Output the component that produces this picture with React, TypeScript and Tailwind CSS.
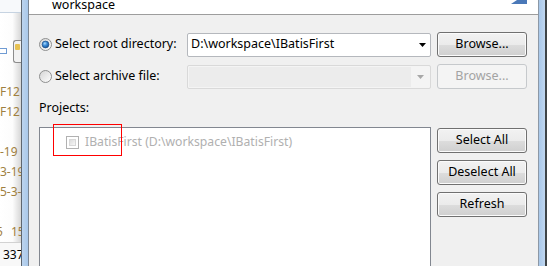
import React from "react";

function Radio({ checked }: { checked?: boolean }) {
  return (
    <svg width="13" height="13" viewBox="0 0 13 13" className="shrink-0">
      <defs>
        <linearGradient id={checked ? "rbOn" : "rbOff"} x1="0" y1="0" x2="1" y2="1">
          <stop offset="0" stopColor="#d4d4d4" />
          <stop offset="1" stopColor="#ffffff" />
        </linearGradient>
        <radialGradient id="rbDot" cx="0.4" cy="0.35" r="0.7">
          <stop offset="0" stopColor="#a9dcff" />
          <stop offset="0.45" stopColor="#3b8ad6" />
          <stop offset="1" stopColor="#0f4c92" />
        </radialGradient>
      </defs>
      <circle cx="6.5" cy="6.5" r="6" fill={checked ? "url(#rbOn)" : "url(#rbOff)"} stroke="#8e8f8f" />
      {checked && <circle cx="6.5" cy="6.5" r="3.4" fill="url(#rbDot)" stroke="#1f4f86" strokeWidth="0.7" />}
    </svg>
  );
}

function Check() {
  return (
    <div className="h-[13px] w-[13px] shrink-0 border border-[#b1b1b1] bg-white p-[2px]">
      <div className="h-full w-full border border-[#d8d8d8] bg-[linear-gradient(135deg,#dcdcdc,#f7f7f7)]" />
    </div>
  );
}

function Btn({ children, disabled }: { children: React.ReactNode; disabled?: boolean }) {
  if (disabled) {
    return (
      <div className="flex h-[25px] w-[90px] items-center justify-center rounded-[3px] border border-[#c6c9cc] bg-[#f4f4f4] text-[#a3a3a3]">
        {children}
      </div>
    );
  }
  return (
    <div className="flex h-[25px] w-[90px] items-center justify-center rounded-[3px] border border-[#707070] bg-[linear-gradient(#f2f2f2_0%,#ebebeb_50%,#dddddd_51%,#cfcfcf_100%)] text-black shadow-[inset_0_0_0_1px_#fbfbfb]">
      {children}
    </div>
  );
}

function LeftStrip() {
  const rows = ["F12", "F12", "", "-19", "3-19", "5-3-"];
  return (
    <div className="flex w-[21px] shrink-0 flex-col overflow-hidden bg-[linear-gradient(to_right,#ffffff_0%,#fcfcfc_60%,#d6d6d6_100%)] text-[12px] text-[#a0803f]">
      <div className="h-[13px] shrink-0 border-b border-[#c6d3e1] bg-[#f7f9fb]" />
      <div className="mt-[27px] flex h-[23px] shrink-0 items-start gap-[6px]">
        <div className="mt-[8px] h-[6px] w-[7px] border border-l-0 border-[#6f9bd3] bg-white" />
        <div className="relative h-[23px] w-[8px] rounded-l-[3px] border border-r-0 border-[#8c8c8c] bg-[#f2f2f2]">
          <div className="ml-[1px] mt-[3px] h-[6px] w-[5px] rounded-[1px] bg-[#e7c253]" />
        </div>
      </div>
      <div className="mt-[19px] flex flex-col whitespace-nowrap leading-[20px]">
        {rows.map((r, i) => (
          <div key={i} className="h-[20px]">
            {r}
          </div>
        ))}
        <div className="h-[20px]" />
        <div className="flex h-[20px]">
          <span className="-ml-[4px]">5</span>
          <span className="ml-[8px]">15</span>
        </div>
      </div>
      <div className="flex h-[24px] items-center border-t border-[#d2d2d2] bg-[#f8f8f8] text-black">
        <div className="mr-[3px] h-[8px] w-[2px] bg-[#37c6d6]" />
        <span className="whitespace-nowrap">337</span>
      </div>
    </div>
  );
}

export default function App() {
  return (
    <div className="relative flex h-[266px] w-[547px] overflow-hidden bg-white font-['Noto_Sans',sans-serif] text-[12.5px] text-black">
      <LeftStrip />
      {/* window frame left */}
      <div className="flex shrink-0">
        <div className="w-[1px] bg-[#5d6670]" />
        <div className="w-[6px] bg-[linear-gradient(to_right,#bcd4ee,#a9c8ea)]" />
        <div className="w-[1px] bg-[#7a8694]" />
      </div>

      {/* dialog */}
      <div className="flex w-[509px] shrink-0 flex-col bg-[#f0f0f0]">
        <div className="flex h-[15px] shrink-0 items-start justify-between overflow-hidden border-b border-[#9d9d9d] bg-white">
          <span className="-mt-[3px] ml-[23px] leading-[16px]">workspace</span>
          <svg width="16" height="4" viewBox="0 0 16 4" className="mr-[11px]">
            <path d="M0 4 L16 4 L16 0 L6 0 Z" fill="#4a78b8" />
          </svg>
        </div>

        <div className="flex flex-col pl-[10px] pt-[17px]">
          <div className="flex h-[25px] items-center">
            <div className="flex w-[148px] items-center gap-[3px]">
              <Radio checked />
              <span>Select root directory:</span>
            </div>
            <div className="flex h-[24px] w-[244px] items-center justify-between rounded-[2px] border border-[#b5b8bd] bg-white pl-[3px] pr-[4px]">
              <span>D:\workspace\IBatisFirst</span>
              <svg width="7" height="4" viewBox="0 0 7 4">
                <path d="M0 0 L7 0 L3.5 4 Z" fill="#000" />
              </svg>
            </div>
            <div className="ml-[6px]">
              <Btn>Browse...</Btn>
            </div>
          </div>

          <div className="mt-[7px] flex h-[25px] items-center">
            <div className="flex w-[148px] items-center gap-[3px]">
              <Radio />
              <span>Select archive file:</span>
            </div>
            <div className="flex h-[24px] w-[244px] items-stretch rounded-[2px] border border-[#d9d9d9] bg-[#f4f4f4] p-[1px]">
              <div className="w-[222px] bg-[#ececec]" />
              <div className="flex flex-1 items-center justify-center">
                <svg width="7" height="4" viewBox="0 0 7 4">
                  <path d="M0 0 L7 0 L3.5 4 Z" fill="#a8a8a8" />
                </svg>
              </div>
            </div>
            <div className="ml-[6px]">
              <Btn disabled>Browse...</Btn>
            </div>
          </div>

          <div className="mt-[11px] leading-[16px]">Projects:</div>

          <div className="mt-[11px] flex">
            <div className="h-[160px] w-[392px] border border-[#828790] bg-white">
              <div className="ml-[26px] mt-[5px] flex items-center gap-[6px]">
                <Check />
                <span className="text-[12.2px] text-[#b0b0b0]">IBatisFirst (D:\workspace\IBatisFirst)</span>
              </div>
            </div>
            <div className="ml-[6px] mt-[1px] flex flex-col gap-[7px]">
              <Btn>Select All</Btn>
              <Btn>Deselect All</Btn>
              <Btn>Refresh</Btn>
            </div>
          </div>
        </div>
      </div>

      {/* window frame right */}
      <div className="flex shrink-0">
        <div className="w-[1px] bg-[#8c98a6]" />
        <div className="w-[6px] bg-[linear-gradient(to_right,#a9c8ea,#c0d7f0)]" />
        <div className="w-[2px] bg-[#3f4447]" />
      </div>

      {/* red annotation box */}
      <div className="absolute left-[53px] top-[124px] h-[32px] w-[69px] border border-[#ff0000]" />
    </div>
  );
}
